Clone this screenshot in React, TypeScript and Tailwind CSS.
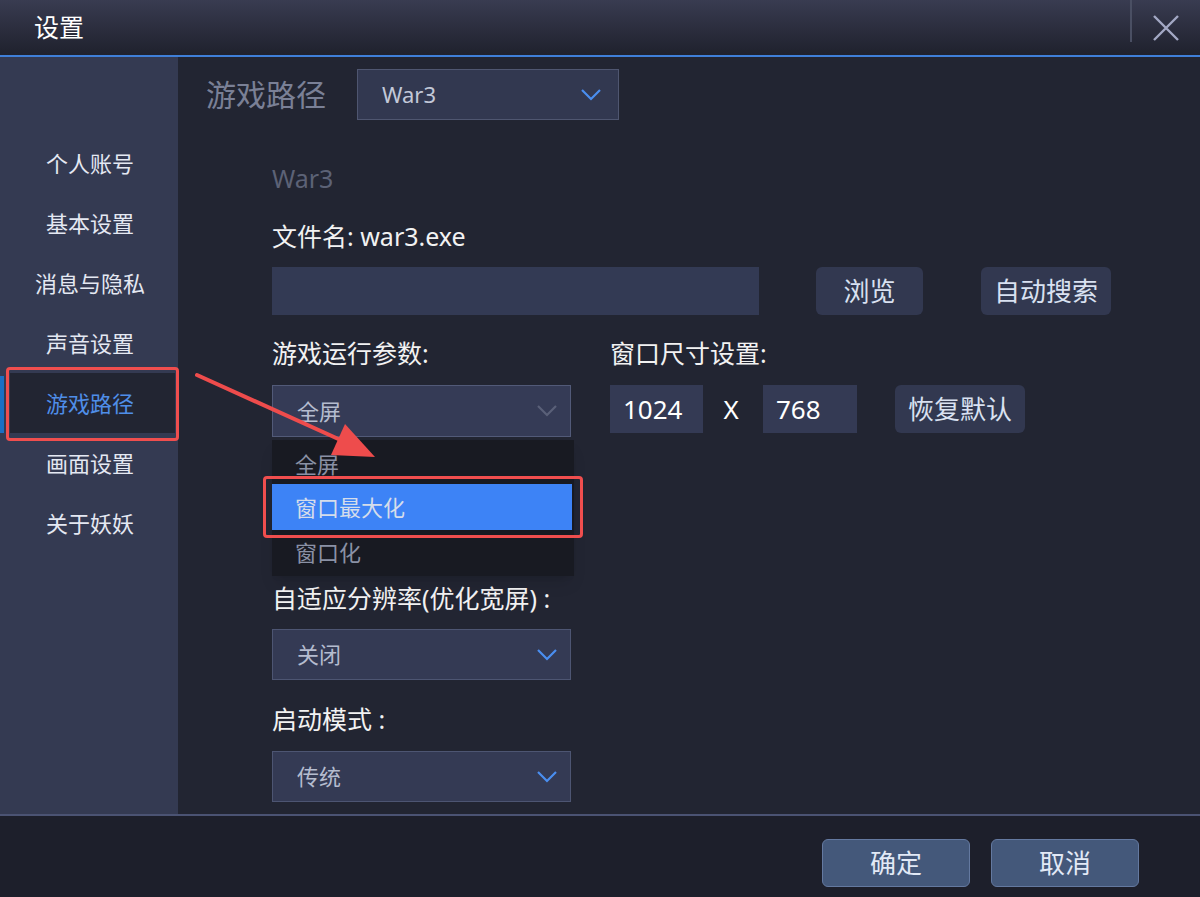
import React from 'react';

const font = { fontFamily: '"Noto Sans", "Noto Sans CJK SC", sans-serif' };

const menu = ['个人账号', '基本设置', '消息与隐私', '声音设置', '游戏路径', '画面设置', '关于妖妖'];

const Chevron: React.FC<{ color: string }> = ({ color }) => (
  <svg width="22" height="14" viewBox="0 0 22 14" fill="none">
    <polyline points="2,2 11,11 20,2" stroke={color} strokeWidth="2.2" />
  </svg>
);

const Select: React.FC<{ value: string; chevron: string; className?: string }> = ({ value, chevron, className }) => (
  <div className={`h-[51px] w-[299px] bg-[#343a54] border border-[#4d5572] flex items-center justify-between pl-6 pr-3 ${className ?? ''}`}>
    <span className="text-[22px] text-[#b5bccf]">{value}</span>
    <Chevron color={chevron} />
  </div>
);

export default function App() {
  return (
    <div className="w-[1200px] h-[897px] flex flex-col bg-[#222532] overflow-hidden relative" style={font}>
      {/* Title bar */}
      <div className="h-[55px] flex items-center bg-gradient-to-b from-[#393c51] to-[#1f212d]">
        <span className="ml-[34px] text-[25px] text-white">设置</span>
        <div className="ml-auto self-start w-[2px] h-[42px] bg-[#4a4f63]" />
        <div className="w-[68px] h-full flex items-center justify-center">
          <svg width="30" height="30" viewBox="0 0 30 30">
            <path d="M3 3 L27 27 M27 3 L3 27" stroke="#a3a8c4" strokeWidth="2.4" />
          </svg>
        </div>
      </div>
      <div className="h-[2px] bg-[#3f7fd8]" />

      {/* Main */}
      <div className="h-[757px] flex">
        {/* Sidebar */}
        <div className="w-[178px] bg-[#343a52] flex flex-col pt-[76px]">
          {menu.map((m) => {
            const active = m === '游戏路径';
            return (
              <div key={m} className="h-[60px] flex items-center relative">
                {active && <div className="absolute left-0 top-[3px] w-[4px] h-[57px] bg-[#1b6fc4]" />}
                <div
                  className={`ml-[10px] w-[165px] h-[60px] flex items-center justify-center text-[22px] pr-[5px] ${
                    active ? 'bg-[#222532] text-[#4f8ee8]' : 'text-[#e4e8f2]'
                  }`}
                >
                  {m}
                </div>
              </div>
            );
          })}
        </div>

        {/* Content */}
        <div className="flex-1 pl-[28px] pt-[12px]">
          <div className="flex items-center h-[51px]">
            <span className="text-[30px] text-[#7a8096] w-[151px]">游戏路径</span>
            <div className="w-[262px] h-[51px] bg-[#323850] border border-[#4f5670] flex items-center justify-between pl-6 pr-4">
              <span className="text-[22px] text-[#c2c8d8]">War3</span>
              <Chevron color="#4a8ef0" />
            </div>
          </div>

          <div className="pl-[66px]">
            <div className="mt-[42px] h-[32px] leading-[32px] text-[25px] text-[#5c6276]">War3</div>
            <div className="mt-[26px] h-[32px] leading-[32px] text-[25px] text-[#f2f2f2]">文件名: war3.exe</div>

            <div className="mt-[15px] flex h-[48px]">
              <div className="w-[487px] bg-[#333a54]" />
              <button className="ml-[57px] w-[107px] rounded-[6px] bg-[#323850] text-[26px] text-[#d9e1f1]">浏览</button>
              <button className="ml-[58px] w-[130px] rounded-[6px] bg-[#323850] text-[26px] text-[#d9e1f1]">自动搜索</button>
            </div>

            <div className="mt-[22px] flex h-[32px] leading-[32px] text-[25px] text-[#f2f2f2]">
              <span className="w-[338px]">游戏运行参数:</span>
              <span>窗口尺寸设置:</span>
            </div>

            <div className="mt-[16px] flex items-start h-[52px]">
              <div className="h-[52px] w-[299px] bg-[#353b56] border border-[#525a78] flex items-center justify-between pl-6 pr-3">
                <span className="text-[22px] text-[#b5bccf]">全屏</span>
                <Chevron color="#5a6078" />
              </div>
              <div className="ml-[39px] w-[93px] h-[48px] bg-[#343a54] flex items-center pl-[13px] text-[26px] text-white">1024</div>
              <div className="w-[60px] h-[48px] flex items-center justify-center text-[26px] text-white pr-[4px]">X</div>
              <div className="w-[94px] h-[48px] bg-[#343a54] flex items-center pl-[13px] text-[26px] text-white">768</div>
              <button className="ml-[38px] w-[130px] h-[48px] rounded-[6px] bg-[#323850] text-[26px] text-[#d9e1f1]">恢复默认</button>
            </div>

            <div className="mt-[145px] h-[32px] leading-[32px] text-[25px] text-[#f2f2f2]">自适应分辨率(优化宽屏) :</div>
            <Select value="关闭" chevron="#4a8ef0" className="mt-[15px]" />
            <div className="mt-[23px] h-[32px] leading-[32px] text-[25px] text-[#f2f2f2]">启动模式 :</div>
            <Select value="传统" chevron="#4a8ef0" className="mt-[16px]" />
          </div>
        </div>
      </div>

      {/* Footer */}
      <div className="h-[2px] bg-[#4b5373]" />
      <div className="flex-1 bg-[#1d1f2b] flex items-start justify-end pr-[61px] pt-[23px] gap-[21px]">
        <button className="w-[148px] h-[48px] rounded-[6px] bg-[#44587a] border border-[#6479a0] text-[26px] text-[#e2e9f6]">确定</button>
        <button className="w-[148px] h-[48px] rounded-[6px] bg-[#44587a] border border-[#6479a0] text-[26px] text-[#e2e9f6]">取消</button>
      </div>

      {/* Open dropdown list */}
      <div className="absolute left-[272px] top-[440px] w-[302px] h-[136px] bg-[#181a22] shadow-lg flex flex-col pt-[4px]">
        <div className="h-[40px] flex items-center pl-[23px] text-[22px] text-[#8a91a5]">全屏</div>
        <div className="h-[46px] w-[300px] bg-[#3d83f6] flex items-center pl-[23px] text-[22px] text-[#d5ddeb]">窗口最大化</div>
        <div className="h-[44px] flex items-center pl-[23px] text-[22px] text-[#8a91a5]">窗口化</div>
      </div>

      {/* Annotations */}
      <div className="absolute left-[6px] top-[367px] w-[173px] h-[74px] border-[3px] border-[#f04e4e] rounded-[4px]" />
      <div className="absolute left-[263px] top-[476px] w-[320px] h-[62px] border-[3px] border-[#f04e4e] rounded-[4px]" />
      <svg className="absolute left-0 top-0" width="1200" height="897" viewBox="0 0 1200 897" style={{ pointerEvents: 'none' }}>
        <line x1="197" y1="375" x2="345" y2="442" stroke="#ee4c4c" strokeWidth="4" strokeLinecap="round" />
        <polygon points="375,457 345,424 331,455" fill="#ee4c4c" />
      </svg>
    </div>
  );
}
